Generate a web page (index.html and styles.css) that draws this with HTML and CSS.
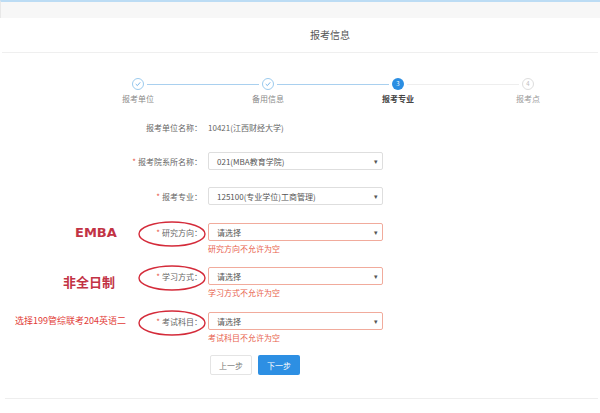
FILE: index.html
```html
<!DOCTYPE html>
<html lang="zh">
<head>
<meta charset="utf-8">
<title>报考信息</title>
<link rel="stylesheet" href="styles.css">
</head>
<body>
<div class="page">
  <div class="topbar"></div>
  <div class="title">报考信息</div>

  <div class="steps">
    <div class="step done">
      <div class="circle"><svg viewBox="0 0 12 12" width="12" height="12"><path d="M4 6.3 L5.4 7.6 L8 4.6" fill="none" stroke="#6aaee6" stroke-width="0.9" stroke-linecap="round" stroke-linejoin="round"/></svg></div>
      <div class="step-label">报考单位</div>
    </div>
    <div class="step done">
      <div class="circle"><svg viewBox="0 0 12 12" width="12" height="12"><path d="M4 6.3 L5.4 7.6 L8 4.6" fill="none" stroke="#6aaee6" stroke-width="0.9" stroke-linecap="round" stroke-linejoin="round"/></svg></div>
      <div class="step-label">备用信息</div>
    </div>
    <div class="step active">
      <div class="circle">3</div>
      <div class="step-label">报考专业</div>
    </div>
    <div class="step todo">
      <div class="circle">4</div>
      <div class="step-label">报考点</div>
    </div>
  </div>

  <div class="form">
    <div class="row r1">
      <div class="label">报考单位名称：</div>
      <div class="value">10421(江西财经大学)</div>
    </div>
    <div class="row r2">
      <div class="label"><span class="req">*</span>报考院系所名称：</div>
      <div class="select"><span>021(MBA教育学院)</span><span class="arrow">▾</span></div>
    </div>
    <div class="row r3">
      <div class="label"><span class="req">*</span>报考专业：</div>
      <div class="select"><span>125100(专业学位)工商管理)</span><span class="arrow">▾</span></div>
    </div>

    <div class="row r4">
      <div class="note note-big">EMBA</div>
      <svg class="ring" viewBox="0 0 70 28" width="70" height="28"><ellipse cx="35" cy="14" rx="33" ry="12" fill="none" stroke="#d42b3a" stroke-width="1.4"/></svg>
      <div class="label"><span class="req">*</span>研究方向：</div>
      <div class="select error"><span>请选择</span><span class="arrow">▾</span></div>
    </div>
    <div class="err">研究方向不允许为空</div>

    <div class="row r5">
      <div class="note note-big note-low">非全日制</div>
      <svg class="ring" viewBox="0 0 70 28" width="70" height="28"><ellipse cx="35" cy="14" rx="33" ry="12" fill="none" stroke="#d42b3a" stroke-width="1.4"/></svg>
      <div class="label"><span class="req">*</span>学习方式：</div>
      <div class="select error"><span>请选择</span><span class="arrow">▾</span></div>
    </div>
    <div class="err">学习方式不允许为空</div>

    <div class="row r6">
      <div class="note note-small">选择199管综联考204英语二</div>
      <svg class="ring" viewBox="0 0 70 28" width="70" height="28"><ellipse cx="35" cy="14" rx="33" ry="12" fill="none" stroke="#d42b3a" stroke-width="1.4"/></svg>
      <div class="label"><span class="req">*</span>考试科目：</div>
      <div class="select error"><span>请选择</span><span class="arrow">▾</span></div>
    </div>
    <div class="err">考试科目不允许为空</div>

    <div class="buttons">
      <div class="btn btn-prev">上一步</div>
      <div class="btn btn-next">下一步</div>
    </div>
  </div>

  <div class="bottom-line"></div>
</div>
</body>
</html>
```

FILE: styles.css
```css
html, body {
  margin: 0;
  padding: 0;
  background: #ffffff;
}
body {
  font-family: "Noto Sans CJK SC", "Noto Sans", "Liberation Sans", sans-serif;
  color: #666666;
  width: 600px;
  height: 413px;
  overflow: hidden;
}
.page {
  width: 600px;
}
.topbar {
  border-top: 2px solid #bcdcf4;
  height: 16px;
  background: #f7f7f7;
  border-left: 1px solid #e8e8e8;
}
.title {
  height: 34px;
  line-height: 34px;
  margin: 0 2px;
  padding-left: 60px;
  text-align: center;
  font-size: 10px;
  color: #555555;
  border-bottom: 1px solid #efefef;
}

/* steps */
.steps {
  display: flex;
  padding-left: 73px;
  margin-top: 25px;
}
.step {
  width: 130px;
  display: flex;
  flex-direction: column;
  align-items: center;
  position: relative;
}
.step:not(:last-child)::after {
  content: "";
  position: absolute;
  top: 6px;
  left: 74px;
  width: 112px;
  height: 1px;
  background: #a9d0ef;
}
.step.active::after {
  background: #eeeeee !important;
}
.circle {
  width: 12px;
  height: 12px;
  box-sizing: border-box;
  border-radius: 50%;
  display: flex;
  align-items: center;
  justify-content: center;
  font-size: 6px;
  line-height: 1;
}
.step.done .circle {
  border: 1px solid #9ccbee;
  background: #ffffff;
}
.step.done .circle svg {
  display: block;
  margin: -1px;
}
.step.active .circle {
  background: #2b8ee2;
  color: #ffffff;
}
.step.todo .circle {
  border: 1px solid #dddddd;
  color: #bbbbbb;
}
.step-label {
  margin-top: 3px;
  line-height: 11px;
  font-size: 8px;
  color: #8a8a8a;
}
.step.active .step-label {
  color: #444444;
  font-weight: bold;
}
.step.todo .step-label {
  color: #999999;
}

/* form */
.form {
  margin-top: 14px;
}
.row {
  position: relative;
  display: flex;
  align-items: center;
  height: 18px;
}
.r2 { margin-top: 16px; }
.r3 { margin-top: 17px; }
.r4 { margin-top: 18px; }
.r5 { margin-top: 12px; }
.r6 { margin-top: 13px; }
.label {
  width: 202px;
  flex: none;
  text-align: right;
  font-size: 8px;
  color: #666666;
  white-space: nowrap;
}
.req {
  color: #e8553f;
  margin-right: 2px;
}
.value {
  margin-left: 6px;
  font-size: 8px;
  color: #666666;
}
.select {
  margin-left: 6px;
  width: 175px;
  height: 18px;
  box-sizing: border-box;
  border: 1px solid #dedede;
  border-radius: 2px;
  display: flex;
  align-items: center;
  justify-content: space-between;
  padding: 0 4px 0 8px;
  font-size: 8px;
  color: #555555;
}
.select.error {
  border-color: #f1ab9c;
}
.arrow {
  font-size: 7px;
  color: #555555;
}
.err {
  margin-left: 208px;
  margin-top: 2px;
  line-height: 12px;
  font-size: 8px;
  color: #e8614d;
}
.buttons {
  display: flex;
  gap: 6px;
  margin-left: 210px;
  margin-top: 11px;
}
.btn {
  width: 42px;
  height: 20px;
  box-sizing: border-box;
  border-radius: 2px;
  font-size: 8px;
  display: flex;
  align-items: center;
  justify-content: center;
}
.btn-prev {
  border: 1px solid #e4e4e4;
  color: #777777;
  background: #ffffff;
}
.btn-next {
  background: #2d8fe3;
  color: #ffffff;
}
.bottom-line {
  margin: 23px 2px 0 5px;
  border-top: 1px solid #eeeeee;
}

/* annotations drawn over the screenshot */
.note {
  position: absolute;
  top: 0;
  line-height: 18px;
  white-space: nowrap;
}
.note-big {
  font-size: 13px;
  font-weight: bold;
  color: #c23345;
  font-family: "DejaVu Sans", "Noto Sans CJK SC", sans-serif;
}
.r4 .note-big {
  left: 75px;
  top: 1px;
}
.note-low {
  left: 63px;
  top: 6px !important;
  font-family: "Noto Sans CJK SC", sans-serif !important;
}
.note-small {
  left: 15px;
  font-size: 9px;
  color: #e23a36;
}
.ring {
  position: absolute;
  left: 137px;
  top: -3px;
}
```
